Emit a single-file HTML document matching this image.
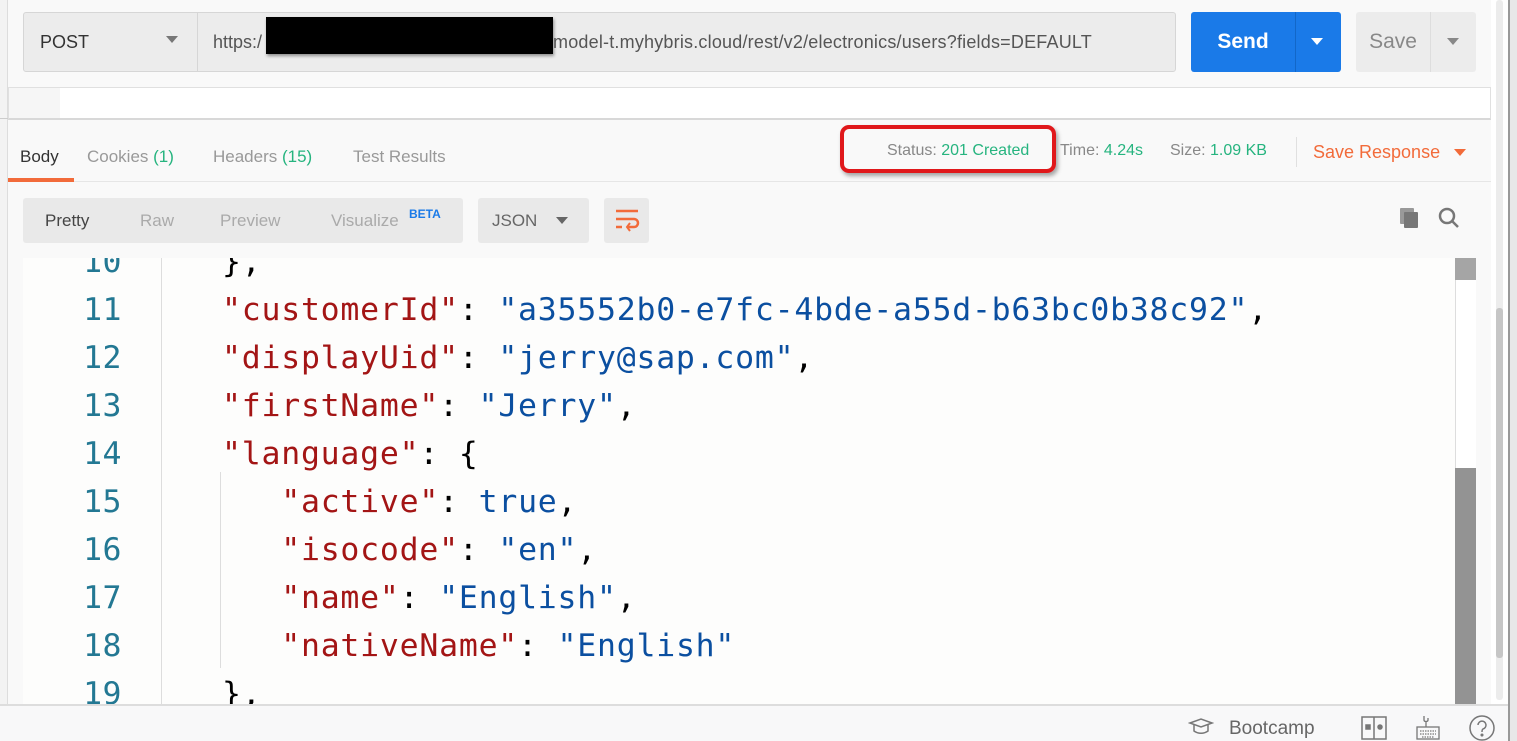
<!DOCTYPE html>
<html><head><meta charset="utf-8"><style>
*{margin:0;padding:0;box-sizing:border-box}
body{width:1517px;height:741px;overflow:hidden;background:#f9f9f9;font-family:"Liberation Sans",sans-serif;position:relative}
.abs{position:absolute}
.code{font-family:"DejaVu Sans Mono","Liberation Mono",monospace;font-size:31.5px;line-height:48px;white-space:pre;letter-spacing:0.77px}
.k{color:#a31515}.s{color:#0b4fa0}.b{color:#0b4fa0}.p{color:#000}
.ln{color:#237893;text-align:right;width:42px;font-family:"DejaVu Sans Mono",monospace;font-size:31.5px;line-height:48px;letter-spacing:0.5px}
</style></head><body>
<div class="abs" style="left:0;top:0;width:8px;height:741px;background:#f3f3f3;border-right:1px solid #ddd"></div>
<div class="abs" style="left:0;top:118px;width:8px;height:1px;background:#ccc"></div>
<div class="abs" style="left:23px;top:12px;width:1153px;height:60px;background:#ececec;border:1px solid #d6d6d6;border-radius:3px"></div>
<div class="abs" style="left:197px;top:13px;width:1px;height:58px;background:#d6d6d6"></div>
<div class="abs" style="left:40px;top:32px;font-size:18px;color:#333">POST</div>
<div class="abs" style="left:166px;top:36px;width:0;height:0;border-left:6px solid transparent;border-right:6px solid transparent;border-top:7px solid #777"></div>
<div class="abs" style="left:213px;top:32px;font-size:18px;color:#555">https:/</div>
<div class="abs" style="left:266px;top:17px;width:287px;height:37px;background:#000;box-shadow:1px 2px 3px rgba(0,0,0,.4)"></div>
<div class="abs" style="left:553px;top:32px;font-size:18px;color:#555;letter-spacing:0.2px">model-t.myhybris.cloud/rest/v2/electronics/users?fields=DEFAULT</div>
<div class="abs" style="left:1191px;top:12px;width:150px;height:60px;background:#1a7ae8;border-radius:3px"></div>
<div class="abs" style="left:1295px;top:12px;width:1px;height:60px;background:#1267c8"></div>
<div class="abs" style="left:1191px;top:30px;width:104px;text-align:center;font-size:21px;font-weight:bold;color:#fff">Send</div>
<div class="abs" style="left:1311px;top:38px;border-left:6px solid transparent;border-right:6px solid transparent;border-top:7px solid #fff"></div>
<div class="abs" style="left:1356px;top:12px;width:120px;height:60px;background:#ececec;border-radius:3px"></div>
<div class="abs" style="left:1430px;top:12px;width:1px;height:60px;background:#ddd"></div>
<div class="abs" style="left:1356px;top:30px;width:74px;text-align:center;font-size:21px;color:#888">Save</div>
<div class="abs" style="left:1447px;top:38px;border-left:6px solid transparent;border-right:6px solid transparent;border-top:7px solid #888"></div>
<div class="abs" style="left:8px;top:87px;width:1483px;height:33px;background:#fff;border:1px solid #e0e0e0;border-bottom:2px solid #d8d8d8"></div>
<div class="abs" style="left:9px;top:88px;width:51px;height:30px;background:#f6f6f6"></div>
<div class="abs" style="left:8px;top:181px;width:1483px;height:1px;background:#e6e6e6"></div>
<div class="abs" style="left:20px;top:147px;font-size:17px;color:#333">Body</div>
<div class="abs" style="left:8px;top:178px;width:66px;height:4px;background:#f26b3a"></div>
<div class="abs" style="left:87px;top:147px;font-size:17px;color:#999">Cookies <span style="color:#26b47f">(1)</span></div>
<div class="abs" style="left:213px;top:147px;font-size:17px;color:#999">Headers <span style="color:#26b47f">(15)</span></div>
<div class="abs" style="left:353px;top:147px;font-size:17px;color:#999">Test Results</div>
<div class="abs" style="left:887px;top:142px;font-size:16px;color:#888">Status: <span style="color:#26b47f">201 Created</span></div>
<div class="abs" style="left:840px;top:125px;width:216px;height:48px;border:4px solid #e0181b;border-radius:9px;box-shadow:2px 3px 4px rgba(0,0,0,.35)"></div>
<div class="abs" style="left:1060px;top:142px;font-size:16px;color:#888">Time: <span style="color:#26b47f">4.24s</span></div>
<div class="abs" style="left:1170px;top:142px;font-size:16px;color:#888">Size: <span style="color:#26b47f">1.09 KB</span></div>
<div class="abs" style="left:1296px;top:137px;width:1px;height:30px;background:#e0e0e0"></div>
<div class="abs" style="left:1313px;top:142px;font-size:18px;color:#f26b3a">Save Response</div>
<div class="abs" style="left:1454px;top:149px;border-left:6px solid transparent;border-right:6px solid transparent;border-top:7px solid #f26b3a"></div>
<div class="abs" style="left:23px;top:198px;width:440px;height:45px;background:#e9e9e9;border-radius:3px"></div>
<div class="abs" style="left:45px;top:211px;font-size:17px;color:#444">Pretty</div>
<div class="abs" style="left:140px;top:211px;font-size:17px;color:#aaa">Raw</div>
<div class="abs" style="left:220px;top:211px;font-size:17px;color:#aaa">Preview</div>
<div class="abs" style="left:331px;top:211px;font-size:17px;color:#aaa">Visualize</div>
<div class="abs" style="left:409px;top:207px;font-size:12px;font-weight:bold;color:#1a7ae8">BETA</div>
<div class="abs" style="left:478px;top:198px;width:111px;height:45px;background:#e9e9e9;border-radius:3px"></div>
<div class="abs" style="left:492px;top:211px;font-size:17px;color:#666">JSON</div>
<div class="abs" style="left:556px;top:217px;border-left:6px solid transparent;border-right:6px solid transparent;border-top:7px solid #666"></div>
<div class="abs" style="left:604px;top:198px;width:45px;height:45px;background:#e9e9e9;border-radius:3px"></div>
<svg class="abs" style="left:613px;top:207px" width="28" height="28" viewBox="0 0 28 28" fill="none" stroke="#f26b3a" stroke-width="2.5"><path d="M3 4h22M3 12h18a4 4 0 0 1 0 8h-6M3 20h6"/><path d="M17 16l-3 4 3 4" stroke-width="2"/></svg>
<svg class="abs" style="left:1398px;top:206px" width="24" height="24" viewBox="0 0 24 24" fill="#777"><rect x="2" y="2" width="14" height="16" rx="1" fill="#999"/><rect x="6" y="6" width="14" height="16" rx="1"/></svg>
<svg class="abs" style="left:1437px;top:206px" width="24" height="24" viewBox="0 0 24 24" fill="none" stroke="#777" stroke-width="2.5"><circle cx="10" cy="10" r="7"/><path d="M15 15l6 6"/></svg>
<div class="abs" style="left:23px;top:258px;width:1432px;height:446px;background:#fdfdfc;overflow:hidden">
 <div class="abs" style="left:138px;top:0;width:1px;height:446px;background:#ddd"></div>
 <div class="abs" style="left:197px;top:214px;width:1px;height:196px;background:#ddd"></div>
 <div class="abs" style="left:57px;top:-20px">
  <div class="ln">10</div><div class="ln">11</div><div class="ln">12</div><div class="ln">13</div><div class="ln">14</div><div class="ln">15</div><div class="ln">16</div><div class="ln">17</div><div class="ln">18</div><div class="ln">19</div>
 </div>
 <div class="abs code" style="left:199px;top:-20px"><span class="p">},</span>
<span class="k">"customerId"</span><span class="p">: </span><span class="s">"a35552b0-e7fc-4bde-a55d-b63bc0b38c92"</span><span class="p">,</span>
<span class="k">"displayUid"</span><span class="p">: </span><span class="s">"jerry@sap.com"</span><span class="p">,</span>
<span class="k">"firstName"</span><span class="p">: </span><span class="s">"Jerry"</span><span class="p">,</span>
<span class="k">"language"</span><span class="p">: {</span>
   <span class="k">"active"</span><span class="p">: </span><span class="b">true</span><span class="p">,</span>
   <span class="k">"isocode"</span><span class="p">: </span><span class="s">"en"</span><span class="p">,</span>
   <span class="k">"name"</span><span class="p">: </span><span class="s">"English"</span><span class="p">,</span>
   <span class="k">"nativeName"</span><span class="p">: </span><span class="s">"English"</span>
<span class="p">},</span></div>
</div>
<div class="abs" style="left:1455px;top:258px;width:21px;height:446px;background:#fff;border-left:1px solid #ddd"></div>
<div class="abs" style="left:1455px;top:258px;width:21px;height:22px;background:#a5a5a5"></div>
<div class="abs" style="left:1455px;top:468px;width:21px;height:236px;background:#939393"></div>
<div class="abs" style="left:1491px;top:0;width:17px;height:704px;background:#fff"></div>
<div class="abs" style="left:1496px;top:0;width:7px;height:700px;background:#ececec;border-radius:3px"></div>
<div class="abs" style="left:1496px;top:308px;width:7px;height:350px;background:#c6c6c6;border-radius:3px"></div>
<div class="abs" style="left:1508px;top:0;width:2px;height:741px;background:#999"></div>
<div class="abs" style="left:1510px;top:0;width:7px;height:741px;background:#e8e8e8"></div>
<div class="abs" style="left:0;top:704px;width:1508px;height:37px;background:#f8f8f9;border-top:2px solid #ddd"></div>
<svg class="abs" style="left:1188px;top:717px" width="26" height="20" viewBox="0 0 26 20" fill="none" stroke="#777" stroke-width="1.5"><path d="M2 6l11-4 11 4-11 4z"/><path d="M6 8v6c4 3 10 3 14 0V8"/></svg>
<div class="abs" style="left:1229px;top:718px;font-size:19px;color:#666">Bootcamp</div>
<svg class="abs" style="left:1361px;top:716px" width="26" height="24" viewBox="0 0 26 24" fill="none" stroke="#777" stroke-width="1.5"><rect x="1" y="1" width="24" height="22"/><path d="M13 1v22"/><rect x="5" y="9" width="4" height="4" fill="#777"/><circle cx="19" cy="11" r="2" fill="#777"/></svg>
<svg class="abs" style="left:1415px;top:714px" width="26" height="27" viewBox="0 0 26 27" fill="none" stroke="#777" stroke-width="1.3"><path d="M9 2v4c0 2 4 2 4 0V4M11 8v5"/><rect x="2" y="13" width="22" height="12"/><path d="M5 17h16M5 20h16M7 23h12" stroke-dasharray="1.5 1"/></svg>
<svg class="abs" style="left:1468px;top:715px" width="28" height="26" viewBox="0 0 28 26" fill="none" stroke="#777" stroke-width="1.5"><circle cx="14" cy="13" r="12"/><path d="M10 10a4 4 0 1 1 5 4c-1 .5-1 1.5-1 3"/><circle cx="14" cy="20" r=".8" fill="#777"/></svg>
</body></html>
